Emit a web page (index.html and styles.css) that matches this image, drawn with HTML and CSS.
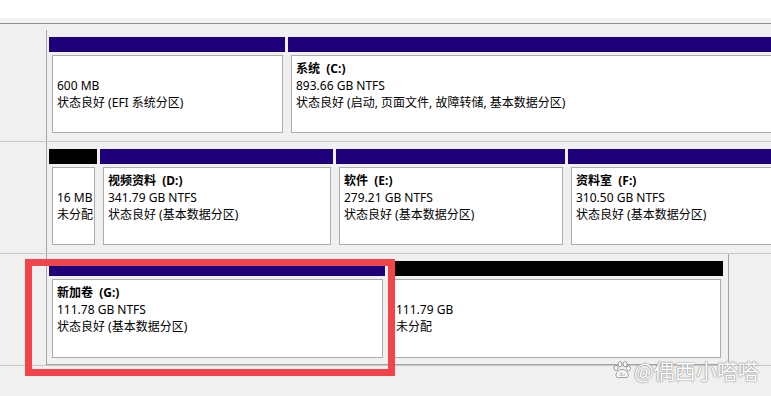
FILE: index.html
```html
<!DOCTYPE html>
<html lang="zh-CN">
<head>
<meta charset="utf-8">
<title>磁盘管理</title>
<link rel="stylesheet" href="styles.css">
</head>
<body>
<div class="top"></div>
<div class="topband"></div>
<div class="disks">
  <div class="disk">
    <div class="label"></div>
    <div class="parts">
      <div class="part" style="width:236px">
        <div class="bar"></div>
        <div class="body"><div class="box"><div class="ln"> </div><div class="ln">600 MB</div><div class="ln">状态良好 (EFI 系统分区)</div></div></div>
      </div>
      <div class="part" style="width:520px">
        <div class="bar"></div>
        <div class="body"><div class="box"><div class="ln title">系统  (C:)</div><div class="ln">893.66 GB NTFS</div><div class="ln">状态良好 (启动, 页面文件, 故障转储, 基本数据分区)</div></div></div>
      </div>
    </div>
  </div>
  <div class="disk">
    <div class="label"></div>
    <div class="parts">
      <div class="part" style="width:48px">
        <div class="bar black"></div>
        <div class="body"><div class="box"><div class="ln"> </div><div class="ln">16 MB</div><div class="ln">未分配</div></div></div>
      </div>
      <div class="part" style="width:233px">
        <div class="bar"></div>
        <div class="body"><div class="box"><div class="ln title">视频资料  (D:)</div><div class="ln">341.79 GB NTFS</div><div class="ln">状态良好 (基本数据分区)</div></div></div>
      </div>
      <div class="part" style="width:229px">
        <div class="bar"></div>
        <div class="body"><div class="box"><div class="ln title">软件  (E:)</div><div class="ln">279.21 GB NTFS</div><div class="ln">状态良好 (基本数据分区)</div></div></div>
      </div>
      <div class="part" style="width:300px">
        <div class="bar"></div>
        <div class="body"><div class="box"><div class="ln title">资料室  (F:)</div><div class="ln">310.50 GB NTFS</div><div class="ln">状态良好 (基本数据分区)</div></div></div>
      </div>
    </div>
  </div>
  <div class="disk">
    <div class="label"></div>
    <div class="parts bounded">
      <div class="part" style="width:336px">
        <div class="bar"></div>
        <div class="body"><div class="box tall"><div class="ln title">新加卷  (G:)</div><div class="ln">111.78 GB NTFS</div><div class="ln">状态良好 (基本数据分区)</div></div></div>
      </div>
      <div class="part" style="width:335px">
        <div class="bar black"></div>
        <div class="body"><div class="box tall"><div class="ln"> </div><div class="ln">111.79 GB</div><div class="ln">未分配</div></div></div>
      </div>
    </div>
  </div>
</div>

<div class="highlight"></div>

<div class="watermark">
  <svg class="paw" width="20" height="18" viewBox="0 0 20 18">
    <g fill="#ffffff" stroke="#9a9a9a" stroke-width="1">
      <ellipse cx="4" cy="7" rx="2" ry="2.6"/>
      <ellipse cx="8" cy="3.2" rx="2" ry="2.6"/>
      <ellipse cx="13" cy="3.2" rx="2" ry="2.6"/>
      <ellipse cx="16.5" cy="7.5" rx="2" ry="2.6"/>
      <path d="M10 8.5 C6.5 8.5 3.5 12.5 4 15 C4.5 17 7.5 16.8 10 16.3 C12.5 16.8 15.8 17 16.2 15 C16.6 12.5 13.5 8.5 10 8.5 Z"/>
    </g>
    <text x="10" y="15.3" font-size="5.5" text-anchor="middle" fill="#9a9a9a" font-family="Liberation Sans, sans-serif">du</text>
  </svg>
  <span class="wm-text">@偶西小嗒嗒</span>
</div>
</body>
</html>
```

FILE: styles.css
```css
html, body {
  margin: 0;
  padding: 0;
}

body {
  width: 771px;
  height: 396px;
  overflow: hidden;
  position: relative;
  background: #f0f0f0;
  font-family: "Noto Sans", "Noto Sans CJK SC", sans-serif;
  font-size: 12px;
  color: #000;
}

.top {
  height: 18px;
  background: #ffffff;
}

.topband {
  height: 5px;
  background: #f2f2f2;
  border-bottom: 1px solid #8f8f8f;
}

.disks {
  padding-top: 6px;
}

.disk {
  display: flex;
  height: 111px;
  border-bottom: 1px solid #c6c6c6;
}

.label {
  flex: none;
  width: 46px;
  border-right: 1px solid #a4a4a4;
}

.parts {
  flex: 1;
  min-width: 0;
  display: flex;
  align-items: flex-start;
  padding: 7px 0 0 2px;
  overflow: hidden;
}

.parts.bounded {
  flex: none;
  box-sizing: border-box;
  width: 682px;
  height: 111px;
  border-right: 1px solid #a4a4a4;
  border-bottom: 1px solid #a4a4a4;
}

.part {
  flex: none;
  display: flex;
  flex-direction: column;
  margin-right: 3px;
}

.bar {
  height: 15px;
  background: #1f007b;
}

.bar.black {
  background: #000000;
}

.body {
  padding: 3px 2px 3px 3px;
}

.box {
  box-sizing: border-box;
  height: 78px;
  background: #ffffff;
  border: 1px solid #acacac;
  padding: 4px 0 0 4px;
  overflow: hidden;
  white-space: pre;
  line-height: 17px;
}

.box.tall {
  height: 79px;
}

.ln {
  height: 17px;
}

.title {
  font-weight: bold;
}

.highlight {
  position: absolute;
  left: 25px;
  top: 259px;
  width: 370px;
  height: 117px;
  box-sizing: border-box;
  border: 7px solid #f3444c;
}

.watermark {
  position: absolute;
  left: 612px;
  top: 357px;
  display: flex;
  align-items: center;
  gap: 2px;
}

.wm-text {
  font-family: "Noto Sans CJK SC", sans-serif;
  font-size: 21px;
  line-height: 26px;
  color: #ffffff;
  text-shadow: 0 0 1px #8a8a8a, 0 0 1px #8a8a8a, 0 0 2px #b0b0b0;
}
```
